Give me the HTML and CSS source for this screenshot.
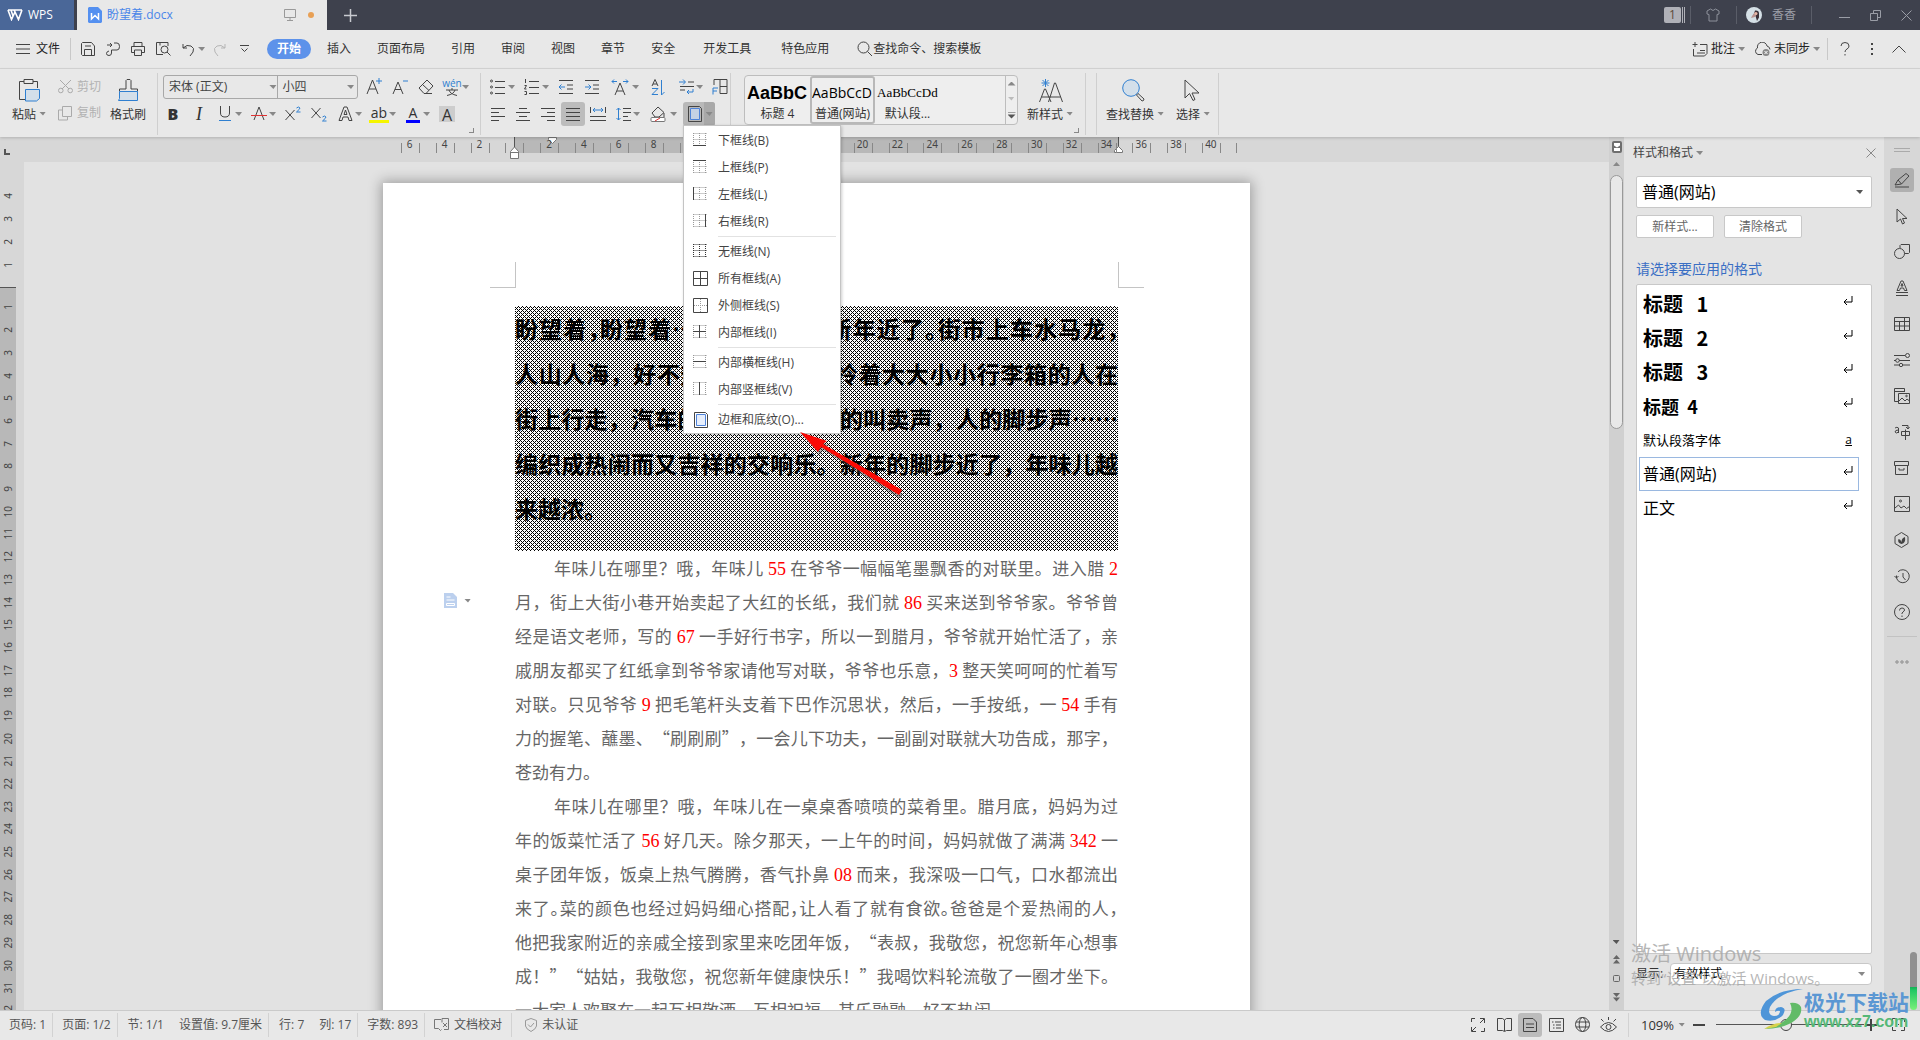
FILE: index.html
```html
<!DOCTYPE html>
<html lang="zh-CN">
<head>
<meta charset="utf-8">
<title>盼望着.docx - WPS</title>
<link rel="stylesheet" href="styles.css">
</head>
<body>
<div class="app">

<header class="titlebar">
  <button class="wps-btn"><svg width="16" height="12" viewBox="0 0 16 12" class="ln"><path d="M1 1h14M1 1l3.500 9.500L8 3l3.500 7.500L15 1M4 1l2 6M8 3L7 1" stroke="#fff" stroke-width="1.600"/></svg>WPS</button>
  <div class="doc-tab">
    <svg width="14" height="16" viewBox="0 0 14 16"><path d="M1 0h9l4 4v11l-1 1H1l-1-1V1z" fill="#5490f0"/><path d="M3.500 6v6L7 8.500l3.500 3.500V6" fill="none" stroke="#fff" stroke-width="1.500"/></svg>
    <span class="doc-name">盼望着.docx</span>
    <svg class="ln" width="12" height="12" viewBox="0 0 12 12"><path d="M.5.5h11v8H.5zM6 8.500v3M3 11.500h6" stroke="#999"/></svg>
    <i class="dot"></i>
  </div>
  <button class="plus" aria-label="新建标签"><svg class="ln" width="13" height="13" viewBox="0 0 13 13"><path d="M6.500 0v13M0 6.500h13" stroke="#c8cad0" stroke-width="1.500"/></svg></button>
  <div class="title-right">
    <div class="badge"><b>1</b><i></i><i></i></div>
    <i class="tsep"></i>
    <svg class="ln shirt" width="14" height="14" viewBox="0 0 14 14"><path d="M4.500 1L1 3v3l2 .5V13h8V6.500l2-.5V3L9.500 1Q7 4 4.500 1z" stroke="#8d919b"/></svg>
    <i class="tsep"></i>
    <svg width="16" height="16" viewBox="0 0 16 16"><circle cx="8" cy="8" r="8" fill="#d5e0e6"/><path d="M9 3.500q4-.5 4 3v4l-2 3.500-1.500-5-2-1z" fill="#3a3038"/><path d="M6 9l3-4 2 2-2 3-4 1z" fill="#b9938f"/><circle cx="10" cy="6.500" r="1.500" fill="#e6b5a5"/></svg>
    <span class="user">香香</span>
    <i class="tsep"></i>
    <button class="win" aria-label="最小化"><svg class="ln" width="11" height="11" viewBox="0 0 11 11"><path d="M0 7.500h11" stroke="#9a9da6"/></svg></button>
    <button class="win" aria-label="还原"><svg class="ln" width="11" height="11" viewBox="0 0 11 11"><path d="M.5 3.500h7v7h-7zM3.500 3V.5h7v7H8" stroke="#9a9da6"/></svg></button>
    <button class="win" aria-label="关闭"><svg class="ln" width="11" height="11" viewBox="0 0 11 11"><path d="M.5.5l10 10M10.500.5l-10 10" stroke="#9a9da6"/></svg></button>
  </div>
</header>

<nav class="menubar">
  <button class="file"><svg class="ln" width="14" height="10" viewBox="0 0 14 10"><path d="M0 .5h14M0 5h14M0 9.500h14"/></svg>文件</button>
  <i class="msep"></i>
  <div class="quick">
    <button aria-label="保存"><svg class="ln" width="14" height="14" viewBox="0 0 14 14"><path d="M.5 1.500v11l1 1h12V4l-3-3.500h-9zM3.500 13.500v-6h7v6M4 4h6"/></svg></button>
    <button aria-label="输出"><svg class="ln" width="14" height="14" viewBox="0 0 14 14"><path d="M1 3h5M4 1l2 2-2 2M8 1h3q2.500 0 2.500 3.500T11 8H5.500v3q0 2.500-2.500 2.500T.5 11.500 3 9"/></svg></button>
    <button aria-label="打印"><svg class="ln" width="14" height="14" viewBox="0 0 14 14"><path d="M3 4V.5h8V4M3 10.500H.5V4.500h13v6H11M3.500 8h7v5.500h-7z"/></svg></button>
    <button aria-label="打印预览"><svg class="ln" width="15" height="14" viewBox="0 0 15 14"><path d="M12 4V.5H.5v12H7M4 .5v3"/><circle cx="8.500" cy="7.500" r="3.500"/><path d="M11 10l3.500 3.500"/></svg></button>
    <button aria-label="撤销" class="undo"><svg class="ln" width="13" height="13" viewBox="0 0 13 13"><path d="M1 1v4h4M1 5q4-4 8-2t2 6l-3 4"/></svg></button><i class="cv"></i>
    <button aria-label="恢复"><svg class="ln" width="13" height="13" viewBox="0 0 13 13"><path d="M12 1v4H8M12 5Q8 1 4 3T2 9l3 4" stroke="#b5b5b5"/></svg></button>
    <button aria-label="更多"><svg class="ln" width="9" height="8" viewBox="0 0 9 8"><path d="M0 .5h9M1.500 3.500l3 3 3-3"/></svg></button>
  </div>
  <div class="tabs">
    <button class="on">开始</button><button>插入</button><button>页面布局</button><button>引用</button><button>审阅</button><button>视图</button><button>章节</button><button>安全</button><button class="pad">开发工具</button><button class="pad">特色应用</button>
    <button class="find"><svg class="ln" width="16" height="16" viewBox="0 0 16 16"><circle cx="6.500" cy="6.500" r="5.500"/><path d="M10.500 10.500L15 15"/></svg>查找命令、搜索模板</button>
  </div>
  <div class="menu-right">
    <button><svg class="ln" width="16" height="15" viewBox="0 0 16 15"><path d="M3 0v5M.5 2.500h5M8 2.500h7v9l-2.500 2.500H1.500V7M5 11h8M8 8.500h5"/></svg>批注<i class="cv"></i></button>
    <button><svg class="ln" width="17" height="14" viewBox="0 0 17 14"><path d="M8 12.500H4A3.500 3.500 0 0 1 3.500 6 4.800 4.800 0 0 1 13 4q3 1 3 3.500"/><circle cx="12" cy="10.500" r="3.500" fill="#888" stroke="none"/><path d="M10.500 9l3 3M13.500 9l-3 3" stroke="#fff"/></svg>未同步<i class="cv"></i></button>
    <i class="msep"></i>
    <button class="mi" aria-label="帮助"><svg class="ln" width="10" height="14" viewBox="0 0 10 14"><path d="M1 4q0-3.500 4-3.500T9 4q0 2-2 3T5 10M5 12v1.500"/></svg></button>
    <button class="mi" aria-label="更多"><svg width="2" height="14" viewBox="0 0 2 14"><path d="M0 1h2v2H0zM0 6h2v2H0zM0 11h2v2H0z" fill="#444"/></svg></button>
    <button class="mi" aria-label="收起"><svg class="ln" width="14" height="8" viewBox="0 0 14 8"><path d="M.5 7.500L7 1l6.500 6.500"/></svg></button>
  </div>
</nav>

<section class="ribbon">
  <div class="group clip">
    <button class="big"><svg class="ln" width="23" height="23" viewBox="0 0 23 23"><path d="M7 20.500H1.500v-18H6M15 2.500h4.500V9M6 .5h9v4H6z"/><path d="M7.500 10.500h14v9l-3 2.500h-11z" fill="#d3dfea" stroke="#2f7fd0"/></svg><span>粘贴<i class="cv"></i></span></button>
    <div class="stack">
      <button class="off"><svg class="ln" width="15" height="14" viewBox="0 0 15 14"><path d="M2 0l9 9M13 0L4 9" stroke="#aaa"/><circle cx="2.800" cy="10.500" r="2.300" stroke="#aaa"/><circle cx="12.200" cy="10.500" r="2.300" stroke="#aaa"/></svg>剪切</button>
      <button class="off"><svg class="ln" width="15" height="15" viewBox="0 0 15 15"><path d="M4.500.5h9v10h-9zM4 4H.5v10h9v-3" stroke="#aaa"/></svg>复制</button>
    </div>
    <button class="big"><svg class="ln" width="21" height="23" viewBox="0 0 21 23"><path d="M1.500 12.500V10H8V1.500L9 .5h3l1 1V10h6.500v2.500"/><path d="M1.500 12.500h18v9H.5l1-2z" fill="#d3dfea" stroke="#2f7fd0"/></svg><span>格式刷</span></button>
  </div>
  <i class="rsep"></i>
  <div class="group font-group">
    <div class="row r6">
      <div class="font-boxes"><select aria-label="字体" class="f-name"><option>宋体 (正文)</option></select><i class="cv"></i><select aria-label="字号" class="f-size"><option>小四</option></select><i class="cv"></i></div>
      <button class="ib" aria-label="增大字号"><svg class="ln" width="18" height="18" viewBox="0 0 18 18"><path d="M2 16L7.500 2 13 16M4 11h7"/><path d="M14 0v6M11 3h6" stroke="#2f7fd0"/></svg></button>
      <button class="ib" aria-label="减小字号"><svg class="ln" width="18" height="18" viewBox="0 0 18 18"><path d="M2 16L7 4l5 12M4 11.500h6"/><path d="M12 3h5" stroke="#2f7fd0"/></svg></button>
      <button class="ib" aria-label="清除格式"><svg class="ln" width="16" height="16" viewBox="0 0 16 16"><path d="M1 9l8-8 6 6-7 7.500H6zM4.500 5.500l6.500 6M8 14.500h6"/></svg></button>
      <button class="ib wen" aria-label="拼音指南"><small>wén</small><svg class="ln" width="12" height="8" viewBox="0 0 12 8"><path d="M6 0v2M0 2h12M3 2q1 4 8 5.500M9 2q-1 4-8 5.500"/></svg></button><i class="cv"></i>
    </div>
    <div class="row r6">
      <button class="ib glyph bold" aria-label="加粗">B</button>
      <button class="ib glyph ital" aria-label="倾斜">I</button>
      <button class="ib" aria-label="下划线"><svg class="ln" width="14" height="16" viewBox="0 0 14 16"><path d="M2.500 0v7q0 4 4.500 4t4.500-4V0"/><path d="M1 14.500h12" stroke="#2f7fd0"/></svg></button><i class="cv"></i>
      <button class="ib" aria-label="删除线"><svg class="ln" width="16" height="16" viewBox="0 0 16 16"><path d="M3 14L8 1l5 13"/><path d="M0 9.500h16" stroke="#d33"/></svg></button><i class="cv"></i>
      <button class="ib" aria-label="上标"><svg class="ln" width="16" height="16" viewBox="0 0 16 16"><path d="M.5 4l9 10M9.500 4l-9 10"/><path d="M11.500 2q2-2 3.500 0 0 1-3.500 4h4" stroke="#2f7fd0"/></svg></button>
      <button class="ib" aria-label="下标"><svg class="ln" width="16" height="16" viewBox="0 0 16 16"><path d="M.5 2l9 10M9.500 2l-9 10"/><path d="M11.500 11q2-2 3.500 0 0 1-3.500 4h4" stroke="#2f7fd0"/></svg></button>
      <button class="ib" aria-label="文字效果"><svg class="ln" width="15" height="16" viewBox="0 0 15 16"><path d="M1 14.500L6 1h3l5 13.500h-3L10 11H5l-1 3.500zM6 8.500L7.500 4 9 8.500z"/></svg></button><i class="cv"></i>
      <button class="ib glyph hl" aria-label="突出显示">ab</button><i class="cv"></i>
      <button class="ib glyph fc" aria-label="字体颜色">A</button><i class="cv"></i>
      <button class="ib glyph sh" aria-label="字符底纹">A</button>
    </div>
    <i class="corner"></i>
  </div>
  <i class="rsep"></i>
  <div class="group para-group">
    <div class="row r6">
      <button class="ib" aria-label="项目符号"><svg class="ln" width="16" height="16" viewBox="0 0 16 16"><path d="M5 2.500h10M5 8.500h10M5 14.500h10"/><circle cx="1.500" cy="2" r="1"/><circle cx="1.500" cy="8" r="1"/><circle cx="1.500" cy="14" r="1"/></svg></button><i class="cv"></i>
      <button class="ib" aria-label="编号"><svg class="ln" width="16" height="16" viewBox="0 0 16 16"><path d="M5 2.500h10M5 8.500h10M5 14.500h10M1.500 0v4M.5 6.500h2L.5 10h2M.5 12.500h2v3h-2"/></svg></button><i class="cv"></i>
      <button class="ib" aria-label="减少缩进"><svg class="ln" width="16" height="14" viewBox="0 0 16 14"><path d="M1 .5h14M9 5h6M9 9h6M1 13.500h14"/><path d="M1 7h6M3.500 4.500L1 7l2.500 2.500" stroke="#2f7fd0"/></svg></button>
      <button class="ib" aria-label="增加缩进"><svg class="ln" width="16" height="14" viewBox="0 0 16 14"><path d="M1 .5h14M9 5h6M9 9h6M1 13.500h14"/><path d="M1 7h6M4.500 4.500L7 7 4.500 9.500" stroke="#2f7fd0"/></svg></button>
      <button class="ib w24" aria-label="字符缩放"><svg class="ln" width="18" height="17" viewBox="0 0 18 17"><path d="M4 16L9 4l5 12M6 12h6"/><path d="M1 2.500h5M3 .5l-2 2 2 2M12 2.500h5M15 .5l2 2-2 2" stroke="#2f7fd0"/></svg></button><i class="cv"></i>
      <button class="ib w24" aria-label="排序"><svg class="ln" width="14" height="17" viewBox="0 0 14 17"><path d="M1 7l3-6.500L7 7M2 5h4"/><path d="M1 9.500h6l-6 6h6M10.500 1v15l3-3" stroke="#2f7fd0"/></svg></button>
      <button class="ib" aria-label="显示段落标记"><svg class="ln" width="15" height="16" viewBox="0 0 15 16"><path d="M9 3h6M1 7.500h14M1 11h5"/><path d="M0 3h6M4 .5L6.500 3 4 5.500M14 10v3H8M10 11l-2 2 2 2" stroke="#2f7fd0"/></svg></button><i class="cv"></i>
      <button class="ib" aria-label="制表位"><svg class="ln" width="16" height="16" viewBox="0 0 16 16"><path d="M2 6V.5h13v14H8M8 .5v14M8 7.500h7"/><path d="M1 15.500V9h5M1 12h4" stroke="#2f7fd0"/></svg></button>
    </div>
    <div class="row r5">
      <button class="ib" aria-label="左对齐"><svg class="ln" width="14" height="13" viewBox="0 0 14 13"><path d="M0 .5h14M0 4.500h8M0 8.500h14M0 12.500h8"/></svg></button>
      <button class="ib" aria-label="居中"><svg class="ln" width="14" height="13" viewBox="0 0 14 13"><path d="M3 .5h8M0 4.500h14M3 8.500h8M0 12.500h14"/></svg></button>
      <button class="ib" aria-label="右对齐"><svg class="ln" width="14" height="13" viewBox="0 0 14 13"><path d="M0 .5h14M6 4.500h8M0 8.500h14M6 12.500h8"/></svg></button>
      <button class="ib sel" aria-label="两端对齐"><svg class="ln" width="14" height="13" viewBox="0 0 14 13"><path d="M0 .5h14M0 4.500h14M0 8.500h14M0 12.500h14"/></svg></button>
      <button class="ib" aria-label="分散对齐"><svg class="ln" width="16" height="14" viewBox="0 0 16 14"><path d="M.5 0v6M15.500 0v6M0 9.500h16M0 13.500h16"/><path d="M3 3h10M5 1L3 3l2 2M11 1l2 2-2 2" stroke="#2f7fd0"/></svg></button>
      <button class="ib" aria-label="行距"><svg class="ln" width="15" height="14" viewBox="0 0 15 14"><path d="M7 1.500h8M7 5.500h8M7 9.500h5M7 13.500h8"/><path d="M2.500 1v12M.5 3l2-2 2 2M.5 11l2 2 2-2" stroke="#2f7fd0"/></svg></button><i class="cv"></i>
      <button class="ib w24" aria-label="底纹"><svg class="ln" width="17" height="17" viewBox="0 0 17 17"><path d="M8 1l6 5.500L9 11H5L2 7zM14 7v4"/><rect x="1" y="11.500" width="14" height="4" rx="1" fill="#fff" stroke="#777"/><path d="M5 15l5-3" stroke="#d33"/></svg></button><i class="cv"></i>
      <div class="border-anchor">
        <button class="border-btn" aria-label="边框"><svg class="ln" width="14" height="16" viewBox="0 0 14 16"><path d="M.5.5h11l2 2v13H.5z"/><path d="M2.500 2.500h9v11h-9z" fill="#c6d2e4" stroke="#4f83d8"/></svg><span><i class="cv"></i></span></button>
        <div class="dropdown" role="menu">
          <button><svg class="bd" viewBox="0 0 15 15"><path class="dt" d="M.5.5h13M.5 6.500h13M.5 0v13M6.500 0v13M12.500 0v13"/><path d="M0 12.500h13"/></svg>下框线(B)</button>
          <button><svg class="bd" viewBox="0 0 15 15"><path class="dt" d="M.5 12.500h13M.5 6.500h13M.5 0v13M6.500 0v13M12.500 0v13"/><path d="M0 .5h13"/></svg>上框线(P)</button>
          <button><svg class="bd" viewBox="0 0 15 15"><path class="dt" d="M.5.5h13M.5 6.500h13M.5 12.500h13M6.500 0v13M12.500 0v13"/><path d="M.5 0v13"/></svg>左框线(L)</button>
          <button><svg class="bd" viewBox="0 0 15 15"><path class="dt" d="M.5.5h13M.5 6.500h13M.5 12.500h13M6.500 0v13M.5 0v13"/><path d="M12.500 0v13"/></svg>右框线(R)</button>
          <hr>
          <button><svg class="bd" viewBox="0 0 15 15"><path class="dt dk" d="M.5.5h13M.5 6.500h13M.5 12.500h13M.5 0v13M6.500 0v13M12.500 0v13"/></svg>无框线(N)</button>
          <button><svg class="bd" viewBox="0 0 15 15"><path d="M.5.5h14v14H.5zM7.500 .5v14M.5 7.500h14"/></svg>所有框线(A)</button>
          <button><svg class="bd" viewBox="0 0 15 15"><path class="dt" d="M7.500 1v13M1 7.500h13"/><path d="M.5.5h14v14H.5z"/></svg>外侧框线(S)</button>
          <button><svg class="bd" viewBox="0 0 15 15"><path class="dt" d="M.5.5h13M.5 12.500h13M.5 0v13M12.500 0v13"/><path d="M6.500 0v13M0 6.500h13"/></svg>内部框线(I)</button>
          <hr>
          <button><svg class="bd" viewBox="0 0 15 15"><path class="dt" d="M.5.5h13M.5 12.500h13M.5 0v13M12.500 0v13"/><path d="M0 6.500h13"/></svg>内部横框线(H)</button>
          <button><svg class="bd" viewBox="0 0 15 15"><path class="dt" d="M.5.5h13M.5 12.500h13M.5 0v13M12.500 0v13"/><path d="M6.500 0v13"/></svg>内部竖框线(V)</button>
          <hr>
          <button><svg class="bd tall" viewBox="0 0 15 16"><path d="M1.500.5h11l2 2v13h-13z"/><path d="M3.500 2.500h9v11h-9z" fill="#e6eefc" stroke="#4f83d8"/></svg>边框和底纹(O)...</button>
          <svg class="arrow" width="106" height="66" viewBox="0 0 106 66"><path d="M0 0l27 10-3 3 77 46-3 5L21 15l-3 5z" fill="#444" opacity=".45" transform="translate(2 3)"/><path d="M0 0l27 9-4 3 79 46-3 5L21 15l-3 5z" fill="#fb0a05"/></svg>
        </div>
      </div>
    </div>
  </div>
  <i class="rsep"></i>
  <div class="group style-group">
    <div class="gallery">
      <button class="st"><b class="h4">AaBbC</b><span>标题 4</span></button>
      <button class="st cur"><b class="web">AaBbCcD</b><span>普通(网站)</span></button>
      <button class="st"><b class="def">AaBbCcDd</b><span>默认段...</span></button>
      <div class="gal-nav"><i class="cv up"></i><i class="cv lite"></i><i class="cv bar"></i></div>
    </div>
    <button class="big ns"><svg class="ln" width="24" height="24" viewBox="0 0 24 24"><path d="M.5 23L5.500 10h1L12 23M2.500 18h19M9.500 23L15.500 4h1L23.500 23"/><path d="M6.500 0v8M2.500 4h8M3.500 1l6 6M9.500 1l-6 6" stroke="#2f7fd0"/></svg><span>新样式<i class="cv"></i></span></button>
    <i class="corner"></i>
  </div>
  <i class="rsep"></i>
  <i class="rsep gap10"></i>
  <div class="group edit-group">
    <button class="big"><svg class="ln" width="23" height="23" viewBox="0 0 23 23"><circle cx="9" cy="9" r="8.300" fill="#d3dfea" stroke="#2f7fd0"/><path d="M14.500 16l1.500-1.500 6 5.500q0 2-2 2z"/></svg><span>查找替换<i class="cv"></i></span></button>
    <button class="big"><svg class="ln" width="16" height="23" viewBox="0 0 16 23"><path d="M1 1v18l4.500-4.500L9 21.500l2-1-3-6.500h7z"/></svg><span>选择<i class="cv"></i></span></button>
  </div>
  <i class="rsep"></i>
</section>

<main class="work">
  <aside class="vruler"><div class="v-corner"><svg class="ln" width="6" height="6" viewBox="0 0 6 6"><path d="M1 0v5h5" stroke="#555" stroke-width="2"/></svg></div>
    <div class="v-top"><b>4</b><b>3</b><b>2</b><b>1</b></div>
    <div class="v-main"><b>1</b><b>2</b><b>3</b><b>4</b><b>5</b><b>6</b><b>7</b><b>8</b><b>9</b><b>10</b><b>11</b><b>12</b><b>13</b><b>14</b><b>15</b><b>16</b><b>17</b><b>18</b><b>19</b><b>20</b><b>21</b><b>22</b><b>23</b><b>24</b><b>25</b><b>26</b><b>27</b><b>28</b><b>29</b><b>30</b><b>31</b><b>32</b></div>
  </aside>
  <section class="canvas">
    <div class="hruler"><div class="h-dark"><svg class="mk lft" width="9" height="22" viewBox="0 0 9 22"><path d="M4.500 0v10" stroke="#555" fill="none"/><path d="M.5 14.500l4-4.500 4 4.500v7h-8zM.5 15.500h8" fill="#fff" stroke="#777"/></svg><svg class="mk ind" width="9" height="7" viewBox="0 0 9 7"><path d="M.5.5h8v2l-4 4-4-4z" fill="#fff" stroke="#777"/></svg><svg class="mk rgt" width="9" height="16" viewBox="0 0 9 16"><path d="M4.500 0v10" stroke="#555" fill="none"/><path d="M.5 15.500v-2l4-4 4 4v2z" fill="#fff" stroke="#777"/></svg></div>
      <div class="h-nums"><b>6</b><b>4</b><b>2</b><b></b><b>2</b><b>4</b><b>6</b><b>8</b><b>10</b><b>12</b><b>14</b><b>16</b><b>18</b><b>20</b><b>22</b><b>24</b><b>26</b><b>28</b><b>30</b><b>32</b><b>34</b><b>36</b><b>38</b><b>40</b></div></div>
    <div class="desk">
      <article class="page">
        <div class="crops"><i class="crop tl"></i><i class="crop tr"></i></div>
        <h1 class="shaded">
          <span>盼望着<em>，</em>盼望着……春节到了<em>，</em>新年近了<em>。</em>街市上车水马龙<em>，</em></span>
          <span>人山人海，好不热闹。提着包<em>、</em>拎着大大小小行李箱的人在</span>
          <span>街上行走，汽车的鸣笛声、商贩的叫卖声，人的脚步声……</span>
          <span>编织成热闹而又吉祥的交响乐。新年的脚步近了，年味儿越</span>
          <span class="last">来越浓。</span>
        </h1>
        <p>
          <span class="ind">年味儿在哪里？哦，年味儿 <i>55</i> 在爷爷一幅幅笔墨飘香的对联里。进入腊 <i>2</i></span>
          <span>月，街上大街小巷开始卖起了大红的长纸，我们就 <i>86</i> 买来送到爷爷家。爷爷曾</span>
          <span>经是语文老师，写的 <i>67</i> 一手好行书字，所以一到腊月，爷爷就开始忙活了，亲</span>
          <span>戚朋友都买了红纸拿到爷爷家请他写对联，爷爷也乐意，<i>3</i> 整天笑呵呵的忙着写</span>
          <span>对联。只见爷爷 <i>9</i> 把毛笔杆头支着下巴作沉思状，然后，一手按纸，一 <i>54</i> 手有</span>
          <span>力的握笔、蘸墨、“刷刷刷”，一会儿下功夫，一副副对联就大功告成，那字，</span>
          <span class="last">苍劲有力。</span>
        </p>
        <p>
          <span class="ind">年味儿在哪里？哦，年味儿在一桌桌香喷喷的菜肴里。腊月底，妈妈为过</span>
          <span>年的饭菜忙活了 <i>56</i> 好几天。除夕那天，一上午的时间，妈妈就做了满满 <i>342</i> 一</span>
          <span>桌子团年饭，饭桌上热气腾腾，香气扑鼻 <i>08</i> 而来，我深吸一口气，口水都流出</span>
          <span class="tight">来了。菜的颜色也经过妈妈细心搭配，让人看了就有食欲。爸爸是个爱热闹的人，</span>
          <span>他把我家附近的亲戚全接到家里来吃团年饭，“表叔，我敬您，祝您新年心想事</span>
          <span>成！”“姑姑，我敬您，祝您新年健康快乐！”我喝饮料轮流敬了一圈才坐下。</span>
          <span class="last">一大家人欢聚在一起互相敬酒，互相祝福，其乐融融，好不热闹。</span>
        </p>
        <div class="paste-tag"><svg width="13" height="15" viewBox="0 0 13 15"><path d="M0 0h9l4 4v11H0z" fill="#bcd0ee"/><path d="M2.500 4h4M2.500 7h8M2.500 10.500h8v2h-8z" fill="none" stroke="#fff"/></svg><i class="cv"></i></div>
      </article>
    </div>
  </section>
  <div class="vscroll">
    <svg width="10" height="12" viewBox="0 0 10 12"><rect width="10" height="12" rx="2" fill="#6e6e6e"/><path d="M2 2h6v2.500L5 6.500 2 4.500zM2 10V7h6v3z" fill="#fff"/></svg>
    <i class="cv up"></i><div class="thumb"></div>
    <div class="vs-end"><i class="cv dk"></i><svg width="9" height="9" viewBox="0 0 9 9"><path d="M4.500 0L8 4H1zM4.500 4.500L8 8.500H1z" fill="#666"/></svg><svg class="ln" width="7" height="7" viewBox="0 0 7 7"><rect x=".5" y=".5" width="6" height="6" rx="1" stroke="#666"/></svg><svg width="9" height="9" viewBox="0 0 9 9"><path d="M4.500 4L8 0H1zM4.500 8.500L8 4.500H1z" fill="#666"/></svg></div>
  </div>
  <aside class="panel">
    <div class="p-head"><span>样式和格式<i class="cv"></i></span><button aria-label="关闭面板"><svg class="ln" width="10" height="10" viewBox="0 0 10 10"><path d="M.5.5l9 9M9.500.5l-9 9" stroke="#888"/></svg></button></div>
    <div class="p-select"><select aria-label="当前样式"><option>普通(网站)</option></select><i class="cv dk"></i></div>
    <div class="p-btns"><button>新样式...</button><button>清除格式</button></div>
    <div class="p-title">请选择要应用的格式</div>
    <ul class="p-list">
      <li class="s1">标题   1<svg class="ret" viewBox="0 0 10 10"><path d="M9 0v6H1M4 3L1 6l3 3"/></svg></li>
      <li class="s1">标题   2<svg class="ret" viewBox="0 0 10 10"><path d="M9 0v6H1M4 3L1 6l3 3"/></svg></li>
      <li class="s1">标题   3<svg class="ret" viewBox="0 0 10 10"><path d="M9 0v6H1M4 3L1 6l3 3"/></svg></li>
      <li class="s4">标题  4<svg class="ret" viewBox="0 0 10 10"><path d="M9 0v6H1M4 3L1 6l3 3"/></svg></li>
      <li class="s5">默认段落字体<u>a</u></li>
      <li class="cur">普通(网站)<svg class="ret" viewBox="0 0 10 10"><path d="M9 0v6H1M4 3L1 6l3 3"/></svg></li>
      <li>正文<svg class="ret" viewBox="0 0 10 10"><path d="M9 0v6H1M4 3L1 6l3 3"/></svg></li>
    </ul>
    <div class="p-show"><label for="show">显示:</label><div class="p-select sm"><select id="show"><option>有效样式</option></select><i class="cv"></i></div></div>
    <div class="activate"><div class="a1">激活 Windows</div><div class="a2">转到“设置”以激活 Windows。</div></div>
  </aside>
  <aside class="rail">
    <svg class="ln grip" width="16" height="4" viewBox="0 0 16 4"><path d="M0 .5h16M0 3.500h16" stroke="#aaa"/></svg>
    <button class="on" aria-label="样式"><svg class="ln" width="16" height="15" viewBox="0 0 16 15"><path d="M1 12l3-5 8-6.500L15 3 7.500 11zM4 7l3.500 4M1 14h14"/></svg></button>
    <button aria-label="选择"><svg class="ln" width="12" height="17" viewBox="0 0 12 17"><path d="M1 1v13l3.500-3 2 5 2-1-2-4.500H11z"/></svg></button>
    <button aria-label="形状"><svg class="ln" width="16" height="16" viewBox="0 0 16 16"><circle cx="5.500" cy="9.500" r="5"/><path d="M6 4V1.500l1-1h8.500v8l-1 1h-4"/></svg></button>
    <button aria-label="艺术字"><svg class="ln" width="14" height="16" viewBox="0 0 14 16"><path d="M2 10.500L6 1h2l4 9.500H9.500L8.500 8h-3l-1 2.500zM6 6l1-2.500L8 6zM1 12.500h12M1 15.500h12"/></svg></button>
    <button aria-label="表格"><svg class="ln" width="16" height="14" viewBox="0 0 16 14"><path d="M.5.5h15v13H.5zM.5 4.500h15M.5 9h15M5.500 4.500v9M10.500.5v13"/></svg></button>
    <button aria-label="属性"><svg class="ln" width="16" height="14" viewBox="0 0 16 14"><path d="M0 2.500h11M0 7.500h2M5 7.500h11M0 12h5M9 12h7"/><circle cx="13.500" cy="2.500" r="2"/><circle cx="3.500" cy="7.500" r="1.800"/><circle cx="7" cy="12" r="1.700"/></svg></button>
    <button aria-label="素材"><svg class="ln" width="16" height="16" viewBox="0 0 16 16"><path d="M4 13.500H.5V.5h10V4M.5 3.500h10M4.500 5.500h11v10h-11zM5 13l3-3 3 3 2-2 2.500 2"/><circle cx="12.500" cy="8" r=".8"/></svg></button>
    <button aria-label="翻译"><svg class="ln" width="16" height="16" viewBox="0 0 16 16"><path d="M1 4q2-1.500 3.500 0V9M4.500 6Q1 6 1 8q1.500 2 3.500 0M8 1.500h6V4M12 3l2 2 1.500-2M7.500 7.500h8v4h-8zM11.500 5.500V16"/></svg></button>
    <button aria-label="归档"><svg class="ln" width="15" height="14" viewBox="0 0 15 14"><path d="M.5.5h14v4H.5zM1.500 4.500v9h12v-9M5 7v2h5V7"/></svg></button>
    <button aria-label="图片"><svg class="ln" width="16" height="16" viewBox="0 0 16 16"><path d="M.5.5h15v15H.5zM1 12l3.500-3L7 12l3-2 2.500 2.500 3-2"/><circle cx="6.500" cy="5" r="1"/></svg></button>
    <button aria-label="工具"><svg class="ln" width="15" height="16" viewBox="0 0 15 16"><path d="M7.500.5l6.500 4v7l-6.500 4L1 11.500v-7z"/><path d="M7.500 12Q3 11 4.500 7q2 0 3 3 0-4 3.500-5 1 6-3.500 7z" fill="#444" stroke="none"/></svg></button>
    <button aria-label="历史"><svg class="ln" width="16" height="15" viewBox="0 0 16 15"><path d="M2.500 9A6.500 6.500 0 1 0 4 2.800M.5 7l2 2 2-2M9 4v4l2.500 3M2.500 9V6.500"/></svg></button>
    <button aria-label="帮助"><svg class="ln" width="16" height="16" viewBox="0 0 16 16"><circle cx="8" cy="8" r="7.500"/><path d="M5.500 6.500q0-2.500 2.500-2.500t2.500 2q0 1-1.500 2T8 10M8 11.500V13"/></svg></button>
    <i class="rail-line"></i>
    <svg class="ln more" width="14" height="4" viewBox="0 0 14 4"><circle cx="2" cy="2" r="1.200" stroke="#888"/><circle cx="7" cy="2" r="1.200" stroke="#888"/><circle cx="12" cy="2" r="1.200" stroke="#888"/></svg>
    <div class="meter"></div>
  </aside>
</main>

<footer class="status">
  <div class="cells"><span>页码: 1</span><span>页面: 1/2</span><span class="two">节: 1/1<b>设置值: 9.7厘米</b></span><span class="two">行: 7<b>列: 17</b></span><span>字数: 893</span><span class="ic"><svg class="ln" width="15" height="13" viewBox="0 0 15 13"><path d="M7 1.500H.5v9h4l2 2 1-1M8 .5h6.500v11H10M8 .5v4M9 5l4 4M13 5L9 9" stroke="#777"/></svg>文档校对</span><span class="ic"><svg class="ln" width="12" height="14" viewBox="0 0 12 14"><path d="M6 .5l5.500 2V8Q11 11 6 13.500 1 11 .5 8V2.500zM3 6.500l2.500 2.500L9 5" stroke="#999"/></svg>未认证</span></div>
  <div class="views">
    <button aria-label="全屏"><svg class="ln" width="14" height="14" viewBox="0 0 14 14"><path d="M9 .5h4.500V5M13 1L9 5M5 13.500H.5V9M1 13l4-4M.5 4V.5H4M13.500 10v3.500H10"/></svg></button>
    <button aria-label="阅读"><svg class="ln" width="15" height="14" viewBox="0 0 15 14"><path d="M.5.5h5l2 1.500 2-1.500h5v12h-5l-2 1-2-1h-5zM7.500 2v11"/></svg></button>
    <button class="on" aria-label="页面视图"><svg class="ln" width="14" height="14" viewBox="0 0 14 14"><path d="M.5.5H10l3.500 3.500v9.500H.5zM3 6h8M3 9.500h8"/></svg></button>
    <button aria-label="大纲"><svg class="ln" width="15" height="14" viewBox="0 0 15 14"><path d="M.5.5h14v13H.5zM3 4h1.500M6 4h6M4 7h1.500M7 7h5M4 10h1.500M7 10h5"/></svg></button>
    <button aria-label="Web版式"><svg class="ln" width="15" height="15" viewBox="0 0 15 15"><circle cx="7.500" cy="7.500" r="7"/><ellipse cx="7.500" cy="7.500" rx="3.300" ry="7"/><path d="M1 5h13M1 10h13"/></svg></button>
    <button aria-label="护眼"><svg class="ln" width="17" height="16" viewBox="0 0 17 16"><path d="M.5 10q8-9 16 0-8 9-16 0zM8.500 0v3M1 2l2.500 2.500M16 2l-2.500 2.500"/><circle cx="8.500" cy="10" r="2.500"/></svg></button>
  </div>
  <div class="zoom"><span>109%<i class="cv"></i></span><button aria-label="缩小"><svg class="ln" width="12" height="2" viewBox="0 0 12 2"><path d="M0 1h12" stroke-width="2"/></svg></button><input type="range" aria-label="缩放" min="0" max="100" value="47"><button aria-label="放大"><svg class="ln" width="12" height="12" viewBox="0 0 12 12"><path d="M0 6h12M6 0v12" stroke-width="2"/></svg></button><button class="fit" aria-label="适合"><svg class="ln" width="13" height="13" viewBox="0 0 13 13"><path d="M.5 4V.5H4M9 .5h3.500V4M12.500 9v3.500H9M4 12.500H.5V9M6 6.500h1"/></svg></button></div>
</footer>

<a class="site" href="#"><svg width="44" height="42" viewBox="0 0 44 42"><path d="M43 0Q20 0 6 12-4 25 5 31q10 3 18-5 4-7-2-8-6 0-6 5 3-2 5-1 0 5-6 5-7-1-4-9Q18 4 43 0z" fill="#4e95d8"/><path d="M30 14q8-1 11 4 2 10-12 17-10 5-25 5 12-2 20-8 11-8 6-18z" fill="#62bb68"/><path d="M4 40q9-6 18-6l-6 4z" fill="#d8d24a"/></svg><span><b>极光下载站</b><em>www.xz7.com</em></span></a>
</div>
</body>
</html>
```
FILE: styles.css
```css
* { box-sizing: border-box; }
body, h1, p, ul { margin: 0; padding: 0; }
body {
  font: 12px/16px "Open Sans", "Noto Sans CJK SC", sans-serif;
  color: #333;
  background: #e2e2e2;
}
button, select, input { font: inherit; color: inherit; }
button { background: none; border: 0; padding: 0; white-space: nowrap; }
select { appearance: none; border: 0; background: none; padding: 0; min-width: 0; }
svg { flex: none; display: block; }
.ln, .bd, .ret { fill: none; stroke: #444; stroke-width: 1; }

.app { height: 100vh; display: flex; flex-direction: column; overflow: hidden; position: relative; }

.cv { flex: none; width: 8px; height: 4px; background: #888; clip-path: polygon(0 0, 7px 0, 50% 100%); display: inline-block; }
.cv.up { clip-path: polygon(50% 0, 100% 100%, 0 100%); }
.cv.dk { background: #555; }
.cv.lite { background: #bbb; }
.cv.bar { height: 7px; background: #555; clip-path: polygon(0 0, 100% 0, 100% 1px, 0 1px, 0 3px, 100% 3px, 50% 100%, 0 3px); }

/* title bar */
.titlebar { flex: none; height: 30px; display: flex; background: #3e414d; }
.wps-btn { width: 74px; background: #4a6798; color: #fff; display: flex; align-items: center; gap: 5px; padding-left: 7px; margin-right: 3px; }
.doc-tab { width: 250px; background: #e8e8e8; display: flex; align-items: center; gap: 5px; padding: 0 13px 0 11px; }
.doc-name { flex: 1; color: #4a86e8; }
.dot { width: 6px; height: 6px; border-radius: 50%; background: #e8a055; margin-left: 7px; }
.plus { width: 46px; display: grid; place-items: center; }
.title-right { margin-left: auto; display: flex; align-items: center; padding-right: 8px; color: #9a9da6; }
.badge { display: flex; gap: 1px; align-items: center; margin-right: 5px; }
.badge b { width: 17px; height: 16px; background: #b0b1b8; border-radius: 2px; color: #5d4a38; text-align: center; font-weight: 400; }
.badge i { width: 1px; height: 16px; background: #b0b1b8; }
.tsep { width: 1px; height: 18px; background: #5a5d68; }
.shirt { margin: 0 16px 0 15px; }
.tsep + svg { margin-left: 9px; }
.tsep + .shirt { margin-left: 15px; }
.user { margin: 0 15px 0 10px; }
.win { width: 31px; height: 30px; display: grid; place-items: center; }
.tsep + .win { margin-left: 17px; }
.win:last-child { margin-right: -10px; }

/* menu bar */
.menubar { flex: none; height: 39px; display: flex; align-items: center; background: #e8e8e8; border-bottom: 1px solid #d6d6d6; }
.file { display: flex; align-items: center; gap: 6px; padding-left: 16px; color: #222; }
.msep { width: 1px; height: 22px; background: #c8c8c8; }
.file + .msep { margin: 0 5px 0 10px; }
.quick { display: flex; align-items: center; gap: 1px; width: 191px; }
.quick button { width: 24px; height: 24px; display: grid; place-items: center; }
.quick .cv { margin-left: -3px; }
.tabs { display: flex; align-items: center; gap: 26px; }
.tabs .on { background: #5d92ea; color: #fff; font-weight: 700; border-radius: 10px; padding: 2px 10px; margin-right: -10px; }
.tabs .pad { padding: 0 2px; }
.find { display: flex; align-items: center; }
.menu-right { margin-left: auto; display: flex; align-items: center; padding-right: 8px; color: #222; }
.menu-right button { display: flex; align-items: center; justify-content: center; gap: 3px; margin-right: 8px; }
.menu-right .msep { margin: 0 3px 0 -2px; }
.menu-right .mi { width: 27px; margin: 0; }

/* ribbon */
.ribbon { flex: none; height: 68px; display: flex; background: #e8e8e8; position: relative; z-index: 2; box-shadow: 0 1px 3px rgba(0,0,0,.18); }
.rsep { width: 1px; height: 62px; margin-top: 4px; background: #cfcfcf; }
.gap10 { margin-left: 10px; }
.group { display: flex; position: relative; }
.big { display: flex; flex-direction: column; align-items: center; height: 44px; margin-top: 10px; justify-content: space-between; }
.big span { display: flex; align-items: center; gap: 3px; }
.big span .cv { margin-bottom: 3px; }
.big svg { margin-bottom: 4px; }
.clip { padding-left: 12px; width: 157px; }
.stack { display: flex; flex-direction: column; gap: 10px; margin: 10px 9px 0 11px; }
.off { display: flex; align-items: center; gap: 4px; color: #b2b2b2; }
.font-group, .para-group { flex-direction: column; gap: 3px; padding-top: 6px; }
.font-group { width: 322px; padding-left: 5px; }
.para-group { width: 249px; padding-left: 7px; }
.row { display: flex; align-items: center; height: 24px; }
.row > .ib, .row > .font-boxes, .row > .border-anchor { margin-right: 6px; }
.row > .cv { margin: 0 6px 0 0; }
.row > .ib:has(+ .cv) { margin-right: 0; }
.r5 > .ib, .r5 > .cv { margin-right: 5px; }
.ib { width: 20px; height: 24px; display: grid; place-items: center; flex: none; }
.w24 { width: 24px; }
.font-boxes { display: flex; align-items: center; width: 195px; height: 24px; border: 1px solid #a8a8a8; border-radius: 3px; padding-right: 2px; color: #444; }
.font-boxes .f-name { width: 106px; padding-left: 5px; }
.font-boxes .f-size { width: 70px; height: 22px; border-left: 1px solid #a8a8a8; padding-left: 4px; }
.wen { place-content: center; gap: 1px; }
.wen small { font-size: 10px; color: #2f7fd0; line-height: 8px; }
.glyph { font-size: 16px; line-height: 18px; }
.bold { font-weight: 800; }
.ital { font-family: "Liberation Serif", serif; font-style: italic; font-size: 18px; }
.hl, .fc { line-height: 13px; height: 17px; border-bottom: 3px solid #ff0; font-size: 14px; }
.hl { border-color: #f5f500; }
.fc { border-color: #00f; width: 14px; margin-left: 3px; }
.row > .fc:has(+ .cv) { margin-right: 3px; }
.sh { background: #cdcdcd; width: 16px; height: 16px; margin-left: 2px; }
.corner { position: absolute; right: 6px; bottom: 4px; width: 5px; height: 5px; border: solid #888; border-width: 0 1px 1px 0; }
.row > .sel { background: #bcbcbc; border-radius: 3px; width: 24px; margin: 0 3px 0 -2px; }
.border-anchor { position: relative; }
.border-btn { display: flex; align-items: center; width: 32px; height: 24px; background: #b8b8b8; border-radius: 3px; padding-left: 5px; gap: 2px; overflow: hidden; }
.border-btn span { display: grid; place-items: center; background: #a8a8a8; width: 11px; height: 24px; }
.dropdown { position: absolute; left: 0; top: 23px; width: 158px; background: #fff; border: 1px solid #c4c4c4; padding: 1px 2px 0; display: flex; flex-direction: column; color: #444; box-shadow: 1px 1px 3px rgba(0,0,0,.2); }
.dropdown button { height: 27px; display: flex; align-items: center; gap: 10px; padding-left: 7px; }
.dropdown hr { border: 0; height: 1px; background: #e2e2e2; margin: 1px 0 1px 32px; width: 118px; }
.bd { width: 15px; height: 15px; }
.bd.tall { height: 16px; }
.bd .dt { stroke: #999; stroke-dasharray: 1 1; }
.bd .dk { stroke: #333; }
.arrow { position: absolute; left: 116px; top: 306px; }

.style-group { width: 354px; padding: 6px 0 0 13px; }
.gallery { width: 274px; height: 50px; border: 1px solid #bdbdbd; border-radius: 4px; display: flex; background: #eee; overflow: hidden; }
.st { width: 65px; overflow: hidden; display: flex; flex-direction: column; align-items: center; justify-content: space-between; border: 1px solid transparent; padding: 2px 0 1px; }
.st b { height: 26px; line-height: 28px; font-weight: 400; color: #000; align-self: flex-start; }
.st.cur { border: 2px solid #b8b8b8; border-radius: 3px; padding: 1px 0 0; }
.st .h4 { font: 700 18px/28px "Liberation Sans", sans-serif; padding-left: 1px; }
.st .web { font-size: 14px; }
.st .def { font: 13px/28px "Liberation Serif", serif; padding-left: 1px; }
.gal-nav { margin-left: auto; width: 12px; border-left: 1px solid #bdbdbd; display: grid; place-items: center; }
.ns { margin: 4px 0 0 9px; }
.edit-group { width: 121px; padding-left: 9px; gap: 11px; }
.edit-group svg { margin-right: 4px; }

/* workspace */
.work { flex: 1; min-height: 0; display: flex; }
.vruler { width: 24px; flex: none; background: #d7d7d7; overflow: hidden; }
.v-corner { height: 47px; padding: 12px 0 0 4px; }
.v-top, .v-main { width: 16px; display: grid; grid-auto-rows: 1fr; justify-items: center; align-items: center; }
.v-top { height: 92px; }
.v-main { height: 735px; background: #b8b8b8; border-top: 1px solid #555; margin-top: 11px; padding-top: 8px; }
.vruler b { font: 10px/12px "Noto Sans", sans-serif; color: #444; writing-mode: vertical-rl; rotate: 180deg; }
.canvas { flex: 1; min-width: 0; display: flex; flex-direction: column; }
.hruler { height: 25px; flex: none; background: #d7d7d7; display: flex; justify-content: center; position: relative; }
.h-dark { position: absolute; left: 50%; top: 0; width: 603px; height: 16px; margin-left: -302px; background: #b8b8b8; }
.mk { position: absolute; }
.lft { left: -5px; top: 0; }
.ind { left: 33px; top: 0; }
.rgt { right: -5px; top: 0; }
.h-nums { width: 836px; height: 16px; margin-left: 5px; display: grid; grid-template-columns: repeat(24, 1fr); position: relative; flex: none; background: linear-gradient(#888, #888) 100% 6px / 1px 10px no-repeat; }
.h-nums b { font: 10px/14px "Noto Sans", sans-serif; color: #444; padding-right: 50%; text-align: center; background: linear-gradient(#888, #888) 0 6px / 1px 10px no-repeat, linear-gradient(#888, #888) 18px 6px / 1px 10px no-repeat; }
.desk { flex: 1; min-height: 0; overflow: hidden; display: flex; justify-content: center; padding-top: 21px; background: #e2e2e2; }
.page { flex: none; width: 867px; background: #fff; box-shadow: 0 0 12px 2px rgba(0,0,0,.3); padding: 79px 132px 0; position: relative; height: 1220px; }
.crops { display: flex; justify-content: space-between; height: 26px; margin: 0 -26px 18px -25px; }
.crop { width: 26px; height: 26px; border: solid #c4c4c4; border-width: 0 1px 1px 0; }
.crop.tr { border-width: 0 0 1px 1px; }
.shaded {
  font: 700 23px/45px "Noto Sans CJK SC", sans-serif; color: #000; padding-bottom: 20px;
  background:
    conic-gradient(from 90deg at 3px 3px, #fff 25%, transparent 0) 2px 1px / 4px 4px,
    conic-gradient(from 90deg at 3px 3px, #fff 25%, transparent 0) 0 3px / 4px 4px,
    conic-gradient(#000 25%, #fff 0 50%, #000 0 75%, #fff 0) 0 0 / 2px 2px;
}
.page span { display: block; white-space: nowrap; text-align: justify; text-align-last: justify; }
.page .last { text-align-last: left; }
.page .ind { padding-left: 39px; }
.shaded em { font-style: normal; font-feature-settings: "halt"; }
.page p { font: 17px/34px "Noto Sans CJK SC", sans-serif; color: #666; text-spacing-trim: space-all; }
.page .tight { font-feature-settings: "halt"; }
.page p i { font: 18px/20px "Liberation Serif", serif; color: #f00; }
.paste-tag { position: absolute; left: 61px; top: 410px; display: flex; align-items: center; gap: 7px; }

.vscroll { width: 15px; flex: none; background: #d0d0d0; display: flex; flex-direction: column; align-items: center; padding: 4px 0 8px; }
.vscroll .up { margin: 9px 0; height: 4px; width: 7px; }
.thumb { width: 13px; height: 254px; border: 1px solid #999; border-radius: 7px; background: #e8e8e8; }
.vs-end { margin-top: auto; display: flex; flex-direction: column; align-items: center; gap: 11px; }

.panel { width: 260px; flex: none; background: #e4e4e4; padding: 8px 12px 25px; display: flex; flex-direction: column; position: relative; }
.p-head { display: flex; justify-content: space-between; align-items: center; height: 16px; margin: 0 -4px 15px -3px; color: #444; }
.p-head .cv { margin: 0 0 2px 3px; }
.p-select { display: flex; align-items: center; background: #fff; border: 1px solid #c8c8c8; border-radius: 2px; height: 32px; padding: 0 7px 0 5px; color: #000; font-size: 16px; }
.p-select select { flex: 1; line-height: 24px; }
.p-btns { display: flex; gap: 10px; margin: 7px 0 22px; }
.p-btns button { width: 78px; height: 23px; background: #fff; border: 1px solid #c8c8c8; border-radius: 2px; color: #666; }
.p-title { font-size: 14px; line-height: 18px; color: #3a6fc4; margin-bottom: 6px; }
.p-list { list-style: none; flex: 1; background: #fff; border: 1px solid #c8c8c8; border-radius: 2px; padding: 2px 12px 0 2px; color: #000; font-size: 16px; }
.p-list li { height: 34px; display: flex; align-items: center; justify-content: space-between; padding: 0 5px 0 3px; border: 1px solid transparent; white-space: pre; }
.p-list .cur { border-color: #9ab8e0; }
.p-list .s1 { font: 700 20px/30px "Noto Sans CJK SC", sans-serif; }
.p-list .s4 { font: 700 18px/30px "Noto Sans CJK SC", sans-serif; }
.p-list .s5 { font-size: 13px; }
.p-list u { font-size: 12px; margin-right: 1px; }
.ret { width: 10px; height: 10px; stroke: #000; margin-bottom: 6px; }
.p-show { display: flex; align-items: center; gap: 7px; margin-top: 9px; }
.p-select.sm { flex: 1; height: 22px; font-size: 12px; border-radius: 4px; padding: 0 5px 0 3px; }
.p-select.sm select { line-height: 16px; }
.activate { position: absolute; left: 7px; bottom: 21px; color: #a9a9a9; opacity: .85; white-space: nowrap; }
.a1 { font-size: 20px; line-height: 26px; }
.a2 { font-size: 15px; line-height: 22px; }

.rail { width: 36px; flex: none; background: #d7d7d7; display: flex; flex-direction: column; align-items: center; position: relative; padding: 11px 1px 0 0; }
.grip { margin-bottom: 16px; }
.rail button { width: 24px; height: 24px; margin-bottom: 12px; display: grid; place-items: center; border-radius: 3px; }
.rail .on { background: #b0b0b0; }
.rail-line { width: 30px; height: 1px; background: #c2c2c2; }
.more { margin-top: 23px; }
.meter { position: absolute; right: 3px; bottom: 0; width: 7px; height: 58px; border-radius: 4px; background: linear-gradient(#909090 60%, #12b055 60%, #22c863 66%, #7af07a); }

/* status bar */
.status { flex: none; height: 30px; display: flex; align-items: center; background: #e8e8e8; border-top: 1px solid #cacaca; color: #555; padding-bottom: 2px; }
.cells { display: flex; }
.cells span { display: flex; align-items: center; height: 24px; padding: 0 6px 0 9px; border-right: 1px solid #d2d2d2; }
.cells span:last-child { border: 0; }
.cells b { font-weight: 400; margin-left: 15px; }
.cells .two { padding: 0 6px 0 10px; }
.cells .ic { gap: 5px; padding-right: 9px; }
.cells .ic:last-child { padding-left: 13px; }
.views { margin-left: auto; display: flex; gap: 2px; padding-right: 8px; border-right: 1px solid #d2d2d2; }
.views button { width: 24px; height: 24px; display: grid; place-items: center; border-radius: 3px; }
.views .on { background: #bcbcbc; }
.zoom { display: flex; align-items: center; padding: 0 15px 0 12px; color: #333; }
.zoom span { display: flex; align-items: center; gap: 4px; width: 52px; font-size: 13px; }
.zoom input { appearance: none; width: 148px; height: 14px; margin: 0 1px 0 11px; background: linear-gradient(#555, #555) 0 50% / 100% 1px no-repeat; }
.zoom input::-webkit-slider-thumb { appearance: none; width: 12px; height: 12px; border: 1px solid #444; border-radius: 50%; background: #e8e8e8; }
.fit { margin-left: 15px; }

.site { position: absolute; right: 11px; bottom: 9px; display: flex; align-items: flex-end; text-decoration: none; }
.site span { display: flex; flex-direction: column; }
.site b { font: 700 21px/24px "Noto Sans CJK SC", sans-serif; color: #5b97d3; }
.site em { font: 700 16px/18px "Liberation Sans", sans-serif; color: #55b877; }
```
